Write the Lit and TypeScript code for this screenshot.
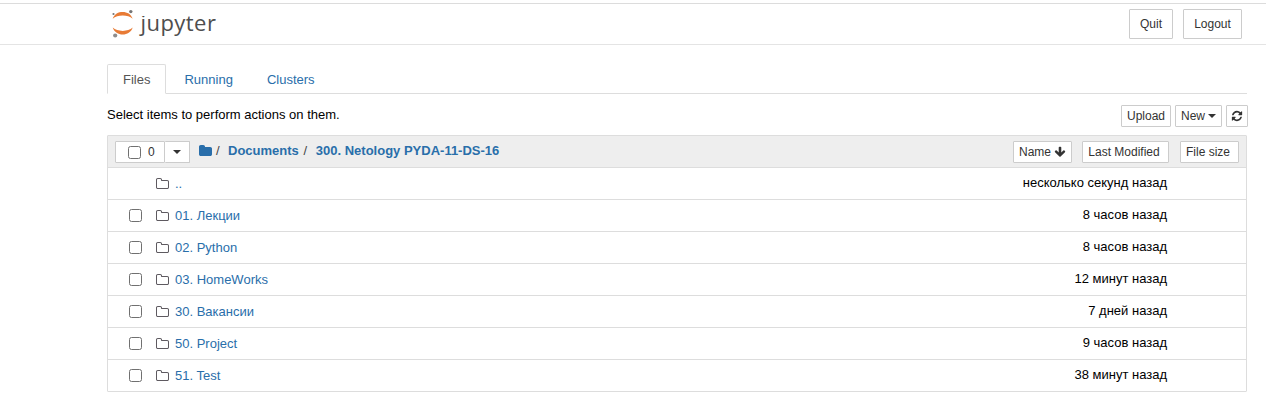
import { LitElement, html, css, svg } from "lit";
import { customElement } from "lit/decorators.js";

const folderOutline = svg`<path d="M1664 1312V608q0-40-28-68t-68-28H864q-40 0-68-28t-28-68v-64q0-40-28-68t-68-28H352q-40 0-68 28t-28 68v960q0 40 28 68t68 28h1216q40 0 68-28t28-68zm128-704v704q0 92-66 158t-158 66H352q-92 0-158-66t-66-158V352q0-92 66-158t158-66h320q92 0 158 66t66 158v32h672q92 0 158 66t66 158z"/>`;
const folderSolid = svg`<path d="M1792 608v704q0 92-66 158t-158 66H352q-92 0-158-66t-66-158V352q0-92 66-158t158-66h320q92 0 158 66t66 158v32h672q92 0 158 66t66 158z"/>`;
const refresh = svg`<path d="M1639 1056q0 5-1 7-64 268-268 434.500T892 1664q-146 0-282.500-55T366 1452l-129 129q-19 19-45 19t-45-19-19-45v-448q0-26 19-45t45-19h448q26 0 45 19t19 45-19 45l-137 137q71 66 161 102t187 36q134 0 250-65t186-179q11-17 53-117 8-23 30-23h192q13 0 22.500 9.500t9.500 22.500zm25-800v448q0 26-19 45t-45 19h-448q-26 0-45-19t-19-45 19-45l138-138Q1097 384 896 384q-134 0-250 65T460 628q-11 17-53 117-8 23-30 23H178q-13 0-22.500-9.500T146 736v-7q65-268 270-434.500T896 128q146 0 284 55.500T1425 340l130-129q19-19 45-19t45 19 19 45z"/>`;
const arrowDown = svg`<path d="M1675 832q0 53-37 90l-651 652q-39 37-91 37-53 0-90-37L155 922q-38-36-38-90 0-53 38-91l74-75q39-37 91-37 53 0 90 37l294 294V256q0-52 38-90t90-38h128q52 0 90 38t38 90v704l294-294q37-37 90-37 52 0 91 37l75 75q37 39 37 91z"/>`;

interface Entry { name: string; modified: string; parent?: boolean }

const entries: Entry[] = [
  { name: "..", modified: "несколько секунд назад", parent: true },
  { name: "01. Лекции", modified: "8 часов назад" },
  { name: "02. Python", modified: "8 часов назад" },
  { name: "03. HomeWorks", modified: "12 минут назад" },
  { name: "30. Вакансии", modified: "7 дней назад" },
  { name: "50. Project", modified: "9 часов назад" },
  { name: "51. Test", modified: "38 минут назад" },
];

@customElement("app-root")
export class AppRoot extends LitElement {
  static styles = css`
    :host { display: block; height: 401px; overflow: hidden; background: #fff; color: #000;
      font: 13px/20px "Liberation Sans", Arial, sans-serif; }
    * { box-sizing: border-box; }
    .header { margin-top: 3px; height: 42px; border-top: 1px solid #dcdcdc; border-bottom: 1px solid #e4e4e4;
      display: flex; justify-content: space-between; padding: 5px 24px 0 107px; }
    .brand { display: flex; }
    .mark { display: block; width: 33px; height: 32px; }
    .word { font: 22px/26px "Open Sans", "Noto Sans", sans-serif; letter-spacing: 0.45px; color: #4e4e4e; margin-left: 0.5px;
      height: 32px; clip-path: polygon(-6px 7px, 9px 7px, 9px 0, 100% 0, 100% 100%, -6px 100%); }
    .session { display: flex; gap: 10px; }
    button { font: 12px/18px "Liberation Sans", Arial, sans-serif; color: #333; background: #fff;
      border: 1px solid #ccc; border-radius: 1px; margin: 0; padding: 0; height: 22px;
      display: flex; align-items: center; justify-content: center; white-space: nowrap; }
    .quit, .logout { height: 30px; }
    .quit { width: 44px; } .logout { width: 59px; }
    .page { margin: 19px 19px 0 107px; }
    .tabs { display: flex; gap: 2px; height: 30px; border-bottom: 1px solid #ddd; }
    .tab { height: 30px; padding: 5px 15px; border: 1px solid transparent; color: #296eaa; }
    .active { color: #555; background: #fff; border-color: #ddd; border-bottom-color: #fff; border-radius: 2px 2px 0 0; }
    .toolbar { display: flex; justify-content: space-between; height: 22px; margin: 11px -1px 8px 0; }
    .tools { display: flex; gap: 4px; }
    .upload { width: 50px; } .new { width: 47px; gap: 3px; } .refresh { width: 22px; }
    .caret { border: 4px solid transparent; border-top-color: currentColor; border-bottom: 0; }
    .list { border: 1px solid #ddd; border-radius: 1px; }
    .head { display: flex; height: 31px; background: #eee; padding: 5px 7px 0; }
    .count { width: 50px; justify-content: flex-start; padding-left: 12px; gap: 7px; }
    .drop { width: 25px; border-left: 0; }
    .crumbs { display: flex; font-weight: bold; color: #296eaa; margin-left: 8px; height: 20px; line-height: 19px; }
    .crumbs svg { width: 14px; height: 14px; margin: 3px 4px 0 0; fill: #296eaa; }
    .slash { font-weight: normal; color: #444; width: 12px; }
    .mid { width: 17px; padding-left: 1px; }
    .sorts { display: flex; margin-left: auto; }
    .name { width: 59px; margin-right: 10px; gap: 3px; }
    .modified { width: 87px; margin-right: 11px; padding-right: 3px; }
    .size { width: 59px; padding-right: 3px; }
    .row { display: flex; height: 32px; border-top: 1px solid #ddd; padding: 5px 79px 0 21px; }
    .box { width: 13px; height: 13px; border: 1px solid #707070; border-radius: 2.5px; background: #fff; }
    .row .box { margin-top: 4px; }
    .hidden { visibility: hidden; }
    .folder { width: 14px; height: 14px; margin: 3.500px 6px 0 13px; fill: #5e5a60; }
    .link { color: #296eaa; padding-top: 1px; }
    .date { margin-left: auto; }
  `;

  render() {
    return html`
      <header class="header">
        <div class="brand">
          <svg class="mark" viewBox="107 9 33 32">
            <path fill="#e87b35" d="M112.700 18.800C114.500 13.900 118.200 12 122.700 12s8.300 2 10 6.800c-2.500-2.200-6-3.200-10-3.200s-7.500 1-10 3.200z"/>
            <path fill="#e87b35" d="M112.700 27.600c2.500 2.200 6 3.300 10 3.300s7.500-1.100 10-3.300c-1.700 4.900-5.500 7-10 7s-8.200-2.100-10-7z"/>
            <circle cx="130.800" cy="11.600" r="1.700" fill="#757575"/>
            <circle cx="113.500" cy="14" r="1.100" fill="#757575"/>
            <circle cx="115.200" cy="35.500" r="2.100" fill="#8d8d8d"/>
          </svg>
          <div class="word">jupyter</div>
        </div>
        <div class="session"><button class="quit">Quit</button><button class="logout">Logout</button></div>
      </header>
      <main class="page">
        <nav class="tabs"><a class="tab active">Files</a><a class="tab">Running</a><a class="tab">Clusters</a></nav>
        <div class="toolbar">
          <span>Select items to perform actions on them.</span>
          <div class="tools">
            <button class="upload">Upload</button>
            <button class="new">New<i class="caret"></i></button>
            <button class="refresh"><svg width="12" height="12" viewBox="0 0 1792 1792" fill="#333">${refresh}</svg></button>
          </div>
        </div>
        <section class="list">
          <div class="head">
            <button class="count"><i class="box"></i>0</button>
            <button class="drop"><i class="caret"></i></button>
            <div class="crumbs">
              <svg viewBox="0 0 1792 1792">${folderSolid}</svg><span class="slash">/</span>
              <a>Documents</a><span class="slash mid">&nbsp;/</span><a class="current">300. Netology PYDA-11-DS-16</a>
            </div>
            <div class="sorts">
              <button class="name">Name<svg width="12" height="12" viewBox="0 0 1792 1792" fill="#333">${arrowDown}</svg></button>
              <button class="modified">Last Modified</button>
              <button class="size">File size</button>
            </div>
          </div>
          ${entries.map((e) => html`
            <div class="row">
              <i class="box ${e.parent ? "hidden" : ""}"></i>
              <svg class="folder" viewBox="0 0 1792 1792">${folderOutline}</svg>
              <a class="link">${e.name}</a>
              <span class="date">${e.modified}</span>
            </div>`)}
        </section>
      </main>
    `;
  }
}
